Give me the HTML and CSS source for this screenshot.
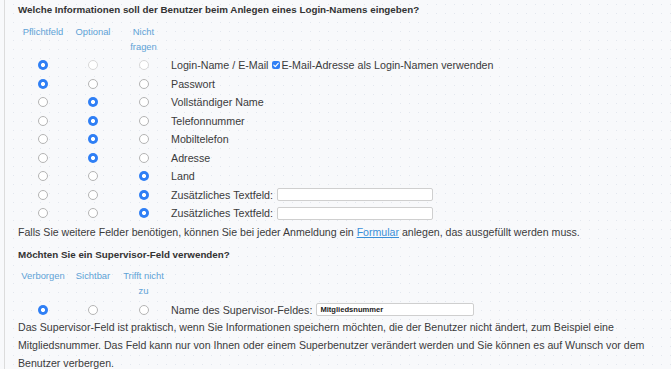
FILE: index.html
```html
<!DOCTYPE html>
<html lang="de">
<head>
<meta charset="utf-8">
<title>Login-Felder</title>
<link rel="stylesheet" href="styles.css">
</head>
<body>
<div class="page">
  <h2 class="q">Welche Informationen soll der Benutzer beim Anlegen eines Login-Namens eingeben?</h2>
  <div class="grid">
    <div class="hd">Pflichtfeld</div>
    <div class="hd">Optional</div>
    <div class="hd">Nicht<br>fragen</div>
    <div class="hd"></div>

    <div class="c"><span class="radio on"></span></div>
    <div class="c"><span class="radio dim"></span></div>
    <div class="c"><span class="radio dim"></span></div>
    <div class="lbl">Login-Name / E-Mail <span class="check"><svg viewBox="0 0 8 8" width="8" height="8"><path d="M1.8 4.2 L3.3 5.7 L6.2 2.3" fill="none" stroke="#fff" stroke-width="1.2" stroke-linecap="round" stroke-linejoin="round"/></svg></span>E-Mail-Adresse als Login-Namen verwenden</div>

    <div class="c"><span class="radio on"></span></div>
    <div class="c"><span class="radio"></span></div>
    <div class="c"><span class="radio"></span></div>
    <div class="lbl">Passwort</div>

    <div class="c"><span class="radio"></span></div>
    <div class="c"><span class="radio on"></span></div>
    <div class="c"><span class="radio"></span></div>
    <div class="lbl">Vollständiger Name</div>

    <div class="c"><span class="radio"></span></div>
    <div class="c"><span class="radio on"></span></div>
    <div class="c"><span class="radio"></span></div>
    <div class="lbl">Telefonnummer</div>

    <div class="c"><span class="radio"></span></div>
    <div class="c"><span class="radio on"></span></div>
    <div class="c"><span class="radio"></span></div>
    <div class="lbl">Mobiltelefon</div>

    <div class="c"><span class="radio"></span></div>
    <div class="c"><span class="radio on"></span></div>
    <div class="c"><span class="radio"></span></div>
    <div class="lbl">Adresse</div>

    <div class="c"><span class="radio"></span></div>
    <div class="c"><span class="radio"></span></div>
    <div class="c"><span class="radio on"></span></div>
    <div class="lbl">Land</div>

    <div class="c"><span class="radio"></span></div>
    <div class="c"><span class="radio"></span></div>
    <div class="c"><span class="radio on"></span></div>
    <div class="lbl">Zusätzliches Textfeld: <span class="input"></span></div>

    <div class="c"><span class="radio"></span></div>
    <div class="c"><span class="radio"></span></div>
    <div class="c"><span class="radio on"></span></div>
    <div class="lbl">Zusätzliches Textfeld: <span class="input"></span></div>
  </div>
  <p class="txt">Falls Sie weitere Felder benötigen, können Sie bei jeder Anmeldung ein <a href="#" class="link">Formular</a> anlegen, das ausgefüllt werden muss.</p>

  <h2 class="q q2">Möchten Sie ein Supervisor-Feld verwenden?</h2>
  <div class="grid">
    <div class="hd">Verborgen</div>
    <div class="hd">Sichtbar</div>
    <div class="hd">Trifft nicht<br>zu</div>
    <div class="hd"></div>

    <div class="c"><span class="radio on"></span></div>
    <div class="c"><span class="radio"></span></div>
    <div class="c"><span class="radio"></span></div>
    <div class="lbl">Name des Supervisor-Feldes: <span class="input sup">Mitgliedsnummer</span></div>
  </div>
  <p class="txt para">Das Supervisor-Feld ist praktisch, wenn Sie Informationen speichern möchten, die der Benutzer nicht ändert, zum Beispiel eine Mitgliedsnummer. Das Feld kann nur von Ihnen oder einem Superbenutzer verändert werden und Sie können es auf Wunsch vor dem Benutzer verbergen.</p>
</div>
</body>
</html>
```

FILE: styles.css
```css
html, body {
  margin: 0;
  padding: 0;
}
body {
  background-color: #f8f9fb;
  background-image: radial-gradient(circle, #e3e7ee 0.6px, transparent 0.9px);
  background-size: 9px 9px;
  font-family: "Liberation Sans", Arial, sans-serif;
  color: #3b3b3b;
  width: 671px;
  height: 369px;
  overflow: hidden;
}
.page {
  margin-left: 4px;
  border-left: 1px solid #dcdcdc;
  padding: 3px 0 0 13px;
  min-height: 369px;
  box-sizing: border-box;
}
.q {
  margin: 0;
  font-size: 9.8px;
  line-height: 14px;
  font-weight: bold;
  color: #333;
}
.q2 {
  margin-top: 7px;
}
.grid {
  display: grid;
  grid-template-columns: 50px 50px 51px auto;
  grid-template-rows: 39px;
  grid-auto-rows: 18.5px;
  align-items: center;
}
.hd {
  align-self: stretch;
  text-align: center;
  font-size: 9.4px;
  line-height: 15px;
  color: #5ea2d6;
  padding-top: 6.5px;
  box-sizing: border-box;
  white-space: nowrap;
}
.c {
  display: flex;
  justify-content: center;
  align-items: center;
}
.radio {
  width: 10px;
  height: 10px;
  border-radius: 50%;
  box-sizing: border-box;
  border: 1px solid #b4b4b4;
  background: #fff;
  display: block;
}
.radio.dim {
  border-color: #d8d8d8;
}
.radio.on {
  border: none;
  background: radial-gradient(circle, #fff 0 1.8px, #2f7ff5 2.3px);
}
.lbl {
  padding-left: 2px;
  font-size: 10.7px;
  line-height: 18px;
  white-space: nowrap;
  display: flex;
  align-items: center;
}
.check {
  display: inline-flex;
  width: 8px;
  height: 8px;
  border-radius: 2px;
  background: #2f7ff5;
  margin-left: 4px;
  margin-right: 1px;
}
.input {
  display: inline-block;
  width: 156px;
  height: 13px;
  margin-left: 4px;
  border: 1px solid #cfcfcf;
  border-radius: 2px;
  background: #fff;
  box-sizing: border-box;
}
.input.sup {
  width: 158px;
  font-size: 7.6px;
  font-weight: bold;
  line-height: 11px;
  padding-left: 3px;
  color: #222;
}
.txt {
  margin: 0;
  font-size: 10.6px;
  line-height: 18px;
}
.para {
  margin-top: -1.5px;
}
.link {
  color: #3a8fd8;
  text-decoration: underline;
}
```
